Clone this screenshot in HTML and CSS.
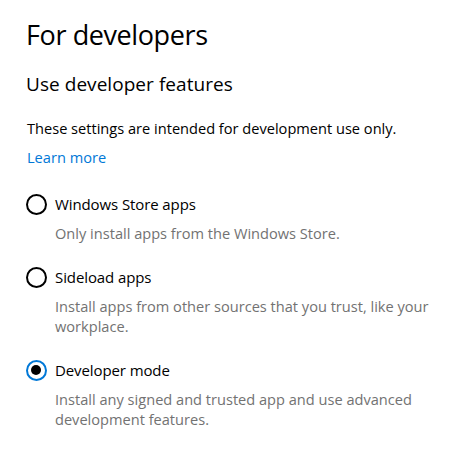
FILE: index.html
```html
<!DOCTYPE html>
<html lang="en">
<head>
<meta charset="utf-8">
<title>For developers</title>
<link rel="stylesheet" href="styles.css">
</head>
<body>
<main class="page">
  <h1 class="title">For developers</h1>
  <h2 class="subtitle">Use developer features</h2>
  <p class="intro">These settings are intended for development use only.</p>
  <a class="link" href="#">Learn more</a>
  <div class="options">
    <div class="option">
      <label class="radio-row"><span class="radio"></span><span class="label">Windows Store apps</span></label>
      <p class="desc">Only install apps from the Windows Store.</p>
    </div>
    <div class="option">
      <label class="radio-row"><span class="radio"></span><span class="label">Sideload apps</span></label>
      <p class="desc">Install apps from other sources that you trust, like your workplace.</p>
    </div>
    <div class="option">
      <label class="radio-row"><span class="radio checked"></span><span class="label">Developer mode</span></label>
      <p class="desc">Install any signed and trusted app and use advanced development features.</p>
    </div>
  </div>
</main>
</body>
</html>
```
FILE: styles.css
```css
html, body {
  margin: 0;
  padding: 0;
  background: #ffffff;
}
body {
  font-family: "Open Sans", "Noto Sans", sans-serif;
  color: #000000;
}
.page {
  padding: 15px 0 0 26px;
  display: flex;
  flex-direction: column;
  align-items: flex-start;
}
.title {
  margin: 0;
  font-size: 27px;
  font-weight: 400;
  line-height: 40px;
  letter-spacing: -0.4px;
}
.subtitle {
  margin: 15px 0 0 0;
  font-size: 19px;
  font-weight: 400;
  line-height: 28px;
  letter-spacing: 0.05px;
}
.intro {
  margin: 20px 0 0 1px;
  font-size: 14.6px;
  line-height: 20px;
  letter-spacing: 0;
}
.link {
  margin: 9px 0 0 1px;
  font-size: 14.6px;
  line-height: 20px;
  color: #0078d7;
  text-decoration: none;
}
.options {
  margin-top: 27px;
  display: flex;
  flex-direction: column;
  gap: 24px;
}
.option {
  display: flex;
  flex-direction: column;
}
.radio-row {
  display: flex;
  align-items: center;
  gap: 9px;
  height: 20px;
  font-size: 15px;
  line-height: 20px;
  letter-spacing: -0.1px;
}
.radio {
  box-sizing: border-box;
  width: 21px;
  height: 21px;
  margin-left: -0.5px;
  margin-right: -0.5px;
  border: 2px solid #000000;
  border-radius: 50%;
  display: flex;
  align-items: center;
  justify-content: center;
}
.radio.checked {
  border-color: #0078d7;
}
.radio.checked::after {
  content: "";
  width: 10px;
  height: 10px;
  border-radius: 50%;
  background: #000000;
}
.desc {
  margin: 9px 0 0 29px;
  max-width: 390px;
  font-size: 14.6px;
  line-height: 20px;
  color: #727272;
  letter-spacing: 0;
}
```
